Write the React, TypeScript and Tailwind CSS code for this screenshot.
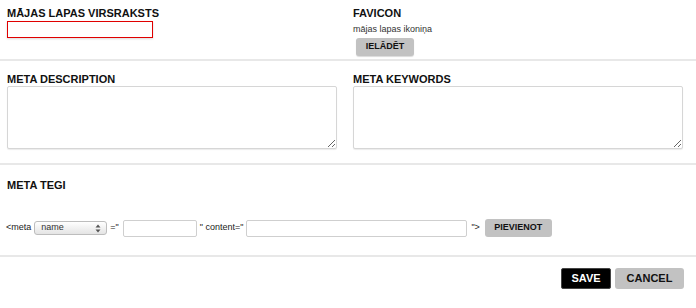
export default function App() {
  return (
    <div className="w-[696px] h-[308px] bg-white text-black overflow-hidden font-['Liberation_Sans',Arial,sans-serif]">
      {/* Section 1 */}
      <div className="h-[59px] flex pl-[7px] pt-[7px]">
        <div className="w-[346px] flex flex-col">
          <div className="text-[11px] leading-[13px] font-bold text-[#111]">MĀJAS LAPAS VIRSRAKSTS</div>
          <input
            type="text"
            className="mt-[1px] w-[146px] h-[17px] border border-[#e00000] bg-white outline-none shadow-[0_1px_2px_rgba(0,0,0,0.15)]"
          />
        </div>
        <div className="flex flex-col">
          <div className="text-[11px] leading-[13px] font-bold text-[#111]">FAVICON</div>
          <div className="text-[9px] leading-[12px] mt-[3px] text-[#333]">mājas lapas ikoniņa</div>
          <button className="ml-[3px] mt-[3px] w-[58px] h-[18px] rounded-[3px] bg-[#c2c2c2] text-[9px] font-bold text-[#111] flex items-center justify-center shadow-[0_1px_1px_rgba(0,0,0,0.15)]">
            IELĀDĒT
          </button>
        </div>
      </div>
      <div className="h-[2px] bg-[#e8e8e8]" />

      {/* Section 2 */}
      <div className="h-[102px] flex gap-[16px] pl-[7px] pt-[12px]">
        <div className="w-[330px] flex flex-col">
          <div className="text-[11px] leading-[13px] font-bold text-[#111]">META DESCRIPTION</div>
          <textarea className="w-[330px] h-[63px] border border-[#d6d6d6] rounded-[2px] bg-white outline-none shadow-[0_1px_1px_rgba(0,0,0,0.08)]" />
        </div>
        <div className="w-[330px] flex flex-col">
          <div className="text-[11px] leading-[13px] font-bold text-[#111]">META KEYWORDS</div>
          <textarea className="w-[330px] h-[63px] border border-[#d6d6d6] rounded-[2px] bg-white outline-none shadow-[0_1px_1px_rgba(0,0,0,0.08)]" />
        </div>
      </div>
      <div className="h-[2px] bg-[#e8e8e8]" />

      {/* Section 3 */}
      <div className="h-[90px] pl-[7px] pt-[14px] flex flex-col">
        <div className="text-[11px] leading-[13px] font-bold text-[#111]">META TEGI</div>
        <div className="mt-[27px] h-[18px] flex items-center text-[9px] text-[#222] -ml-[1px]">
          <span>&lt;meta</span>
          <div className="ml-[3px] w-[73px] h-[14px] rounded-[3px] border border-[#bdbdbd] bg-gradient-to-b from-white to-[#e4e4e4] flex items-center">
            <span className="pl-[6px] flex-1 text-[9px] text-[#333]">name</span>
            <svg width="6" height="9" viewBox="0 0 6 9" className="mr-[5px]">
              <path d="M3 0.5 L5.5 3.5 L0.5 3.5 Z" fill="#555" />
              <path d="M3 8.5 L5.5 5.5 L0.5 5.5 Z" fill="#555" />
            </svg>
          </div>
          <span className="ml-[3px]">="</span>
          <input
            type="text"
            className="ml-[4px] w-[74px] h-[17px] border border-[#cfcfcf] rounded-[2px] bg-white outline-none"
          />
          <span className="ml-[3px]">" content="</span>
          <input
            type="text"
            className="ml-[3px] w-[221px] h-[17px] border border-[#cfcfcf] rounded-[2px] bg-white outline-none"
          />
          <span className="ml-[4px]">"&gt;</span>
          <button className="ml-[5px] w-[67px] h-[18px] rounded-[3px] bg-[#c2c2c2] text-[9px] font-bold text-[#111] flex items-center justify-center">
            PIEVIENOT
          </button>
        </div>
      </div>
      <div className="h-[2px] bg-[#e8e8e8]" />

      {/* Footer */}
      <div className="flex justify-end pr-[12px] pt-[11px] gap-[4px]">
        <button className="w-[50px] h-[21px] rounded-[2px] bg-black border border-[#444] text-white text-[11px] font-bold flex items-center justify-center">
          SAVE
        </button>
        <button className="w-[69px] h-[21px] rounded-[3px] bg-[#c2c2c2] text-[#111] text-[11px] font-bold flex items-center justify-center">
          CANCEL
        </button>
      </div>
    </div>
  );
}
